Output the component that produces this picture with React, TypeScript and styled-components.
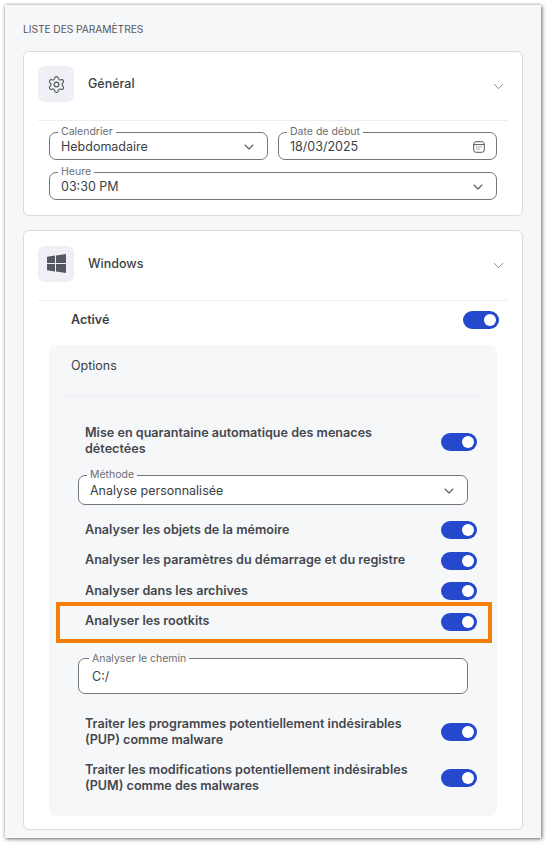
import React from "react";
import styled, { createGlobalStyle } from "styled-components";
import { ChevronDown, Settings } from "lucide-react";

const GlobalStyle = createGlobalStyle`
  html, body {
    margin: 0;
    background: #fff;
    font-family: Inter, "Liberation Sans", sans-serif;
    color: #3c3f45;
  }
`;

function WindowsIcon() {
  return (
    <svg width="19" height="19" viewBox="0 0 19 19" fill="#55585e">
      <path d="M0 2.8 8 1.6V9H0zM9 1.4 19 0v9H9zM0 10h8v7.4L0 16.2zM9 10h10v9L9 17.6z" />
    </svg>
  );
}

function CalendarIcon() {
  return (
    <svg width="14" height="12" viewBox="-1 0 14 12" fill="none" stroke="#55585e" strokeWidth="1">
      <rect x="0.7" y="0.7" width="10.6" height="10.6" rx="2.4" />
      <path d="M0.7 3.6h10.6" />
      <path d="M3.4 6h1M5.5 6h1M7.6 6h1M3.4 8.2h1M5.5 8.2h1" />
    </svg>
  );
}

function Switch() {
  return (
    <Track>
      <Knob />
    </Track>
  );
}

function SettingRow({ label, tall, marked }: { label: string; tall?: boolean; marked?: boolean }) {
  return (
    <Row $tall={tall}>
      <RowLabel>{label}</RowLabel>
      <Switch />
      {marked && <Highlight />}
    </Row>
  );
}

export default function App() {
  return (
    <>
      <GlobalStyle />
      <Page>
        <Panel>
          <Title>LISTE DES PARAMÈTRES</Title>
          <Card>
            <CardHead $height={69}>
              <IconBox>
                <Settings size={19} strokeWidth={1.4} color="#55585e" />
              </IconBox>
              <CardName>Général</CardName>
              <Fold>
                <ChevronDown size={17} strokeWidth={1} />
              </Fold>
            </CardHead>
            <GeneralFields>
              <Field>
                <FieldLabel>Calendrier</FieldLabel>
                <FieldValue>Hebdomadaire</FieldValue>
                <ChevronDown size={16} strokeWidth={1.6} color="#55585e" />
              </Field>
              <Field>
                <FieldLabel>Date de début</FieldLabel>
                <FieldValue>18/03/2025</FieldValue>
                <CalendarIcon />
              </Field>
              <WideField>
                <FieldLabel>Heure</FieldLabel>
                <FieldValue>03:30 PM</FieldValue>
                <ChevronDown size={16} strokeWidth={1.6} color="#55585e" />
              </WideField>
            </GeneralFields>
          </Card>
          <Card>
            <CardHead $height={70}>
              <IconBox>
                <WindowsIcon />
              </IconBox>
              <CardName>Windows</CardName>
              <Fold>
                <ChevronDown size={17} strokeWidth={1} />
              </Fold>
            </CardHead>
            <ActiveRow>
              <ActiveLabel>Activé</ActiveLabel>
              <Switch />
            </ActiveRow>
            <Options>
              <OptionsHead>Options</OptionsHead>
              <OptionsBody>
                <SettingRow tall label="Mise en quarantaine automatique des menaces détectées" />
                <MethodField>
                  <FieldLabel>Méthode</FieldLabel>
                  <FieldValue>Analyse personnalisée</FieldValue>
                  <ChevronDown size={16} strokeWidth={1.6} color="#55585e" />
                </MethodField>
                <ScanRows>
                  <SettingRow label="Analyser les objets de la mémoire" />
                  <SettingRow label="Analyser les paramètres du démarrage et du registre" />
                  <SettingRow label="Analyser dans les archives" />
                  <SettingRow marked label="Analyser les rootkits" />
                </ScanRows>
                <PathField>
                  <FieldLabel>Analyser le chemin</FieldLabel>
                  <FieldValue>C:/</FieldValue>
                </PathField>
                <TreatRows>
                  <SettingRow tall label="Traiter les programmes potentiellement indésirables (PUP) comme malware" />
                  <SettingRow tall label="Traiter les modifications potentiellement indésirables (PUM) comme des malwares" />
                </TreatRows>
              </OptionsBody>
            </Options>
          </Card>
        </Panel>
      </Page>
    </>
  );
}

const Page = styled.div`
  width: 550px;
  height: 848px;
  padding: 5px 9px 10px 5px;
  box-sizing: border-box;
`;
const Panel = styled.div`
  height: 833px;
  box-sizing: border-box;
  background: #f6f7f9;
  box-shadow: 1px 1px 4px rgba(0, 0, 0, 0.55), 0 0 3px rgba(0, 0, 0, 0.18);
  padding: 17px 18px 0;
`;
const Title = styled.div`
  font-size: 10.3px;
  line-height: 14px;
  letter-spacing: -0.1px;
  color: #55585e;
  margin-bottom: 15px;
`;
const Card = styled.section`
  background: #fff;
  border: 1px solid #d9dbdf;
  border-radius: 6px;
  padding: 0 14px;
  margin-bottom: 14px;
`;
const CardHead = styled.div<{ $height: number }>`
  height: ${(p) => p.$height}px;
  box-sizing: border-box;
  padding-bottom: 4px;
  display: flex;
  align-items: center;
  gap: 14px;
  border-bottom: 1px solid #eceef1;
`;
const IconBox = styled.div`
  width: 36px;
  height: 36px;
  border-radius: 7px;
  background: #eff0f5;
  display: flex;
  align-items: center;
  justify-content: center;
`;
const CardName = styled.div`
  font-size: 12.5px;
  font-weight: 500;
  color: #3c3f45;
  flex: 1;
  margin-bottom: 1px;
`;
const Fold = styled.div`
  display: flex;
  margin: 4px 1px 0 0;
  color: #55585e;
`;
const GeneralFields = styled.div`
  display: grid;
  grid-template-columns: 1fr 1fr;
  gap: 6px 10px;
  padding: 5px 11px 15px;
`;
const Field = styled.fieldset`
  margin: 0;
  padding: 0 10px 3px 11px;
  background: #fff;
  border: 1px solid #72757b;
  border-radius: 7px;
  height: 34px;
  box-sizing: border-box;
  display: flex;
  align-items: center;
  justify-content: space-between;
  min-width: 0;
`;
const WideField = styled(Field)`
  grid-column: 1 / 3;
`;
const MethodField = styled(Field)`
  height: 36px;
  margin: 12px 9px 0 -7px;
`;
const PathField = styled(Field)`
  height: 41px;
  margin: 22px 9px 0 -7px;
  padding-left: 13px;
`;
const FieldLabel = styled.legend`
  padding: 0 3px;
  margin-left: -3px;
  font-size: 10.5px;
  line-height: 12px;
  color: #6a6d73;
`;
const FieldValue = styled.span`
  font-size: 12.5px;
  line-height: 16px;
  color: #3c3f45;
`;
const ActiveRow = styled.div`
  height: 36px;
  display: flex;
  align-items: center;
  justify-content: space-between;
  padding: 0 9px 0 33px;
  margin-bottom: 8px;
`;
const ActiveLabel = styled.div`
  font-size: 12.5px;
  font-weight: 600;
  color: #3c3f45;
`;
const Track = styled.div`
  flex: none;
  width: 36px;
  height: 18px;
  margin-top: 2px;
  border-radius: 9px;
  background: #2648cc;
  position: relative;
`;
const Knob = styled.div`
  position: absolute;
  right: 3px;
  top: 3px;
  width: 12px;
  height: 12px;
  border-radius: 50%;
  background: #fff;
`;
const Options = styled.div`
  background: #f6f7f9;
  border-radius: 7px;
  margin: 0 11px 13px;
  padding: 0 15px;
  height: 471px;
  box-sizing: border-box;
`;
const OptionsHead = styled.div`
  height: 52px;
  box-sizing: border-box;
  padding: 12px 0 0 7px;
  font-size: 12.5px;
  line-height: 17px;
  color: #3c3f45;
  border-bottom: 1px solid #eceef1;
`;
const OptionsBody = styled.div`
  padding: 27px 5px 0 21px;
`;
const Row = styled.div<{ $tall?: boolean }>`
  position: relative;
  display: flex;
  align-items: center;
  justify-content: space-between;
  gap: 14px;
  min-height: ${(p) => (p.$tall ? "32px" : "20px")};
`;
const RowLabel = styled.div`
  padding-top: 1px;
  font-size: 12.6px;
  line-height: 16px;
  font-weight: 600;
  color: #44474d;
  max-width: 336px;
`;
const Highlight = styled.div`
  position: absolute;
  left: -29px;
  right: -15px;
  top: -9px;
  bottom: -12px;
  border: 4.5px solid #f57e0a;
  pointer-events: none;
`;
const ScanRows = styled.div`
  display: flex;
  flex-direction: column;
  gap: 10.5px;
  margin-top: 14px;
`;
const TreatRows = styled.div`
  display: flex;
  flex-direction: column;
  gap: 13px;
  margin-top: 21px;
`;
